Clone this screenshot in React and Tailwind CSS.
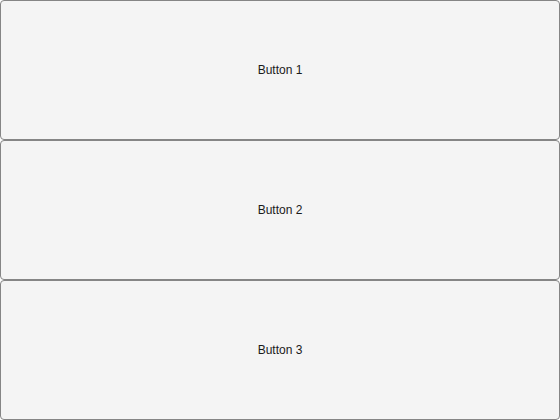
export default function App() {
  const buttons = ["Button 1", "Button 2", "Button 3"];

  return (
    <div className="flex flex-col w-[560px] h-[420px] bg-white font-['Liberation_Sans',Arial,sans-serif]">
      {buttons.map((label) => (
        <button
          key={label}
          className="h-[140px] w-full bg-[#f4f4f4] border border-[#858585] rounded-[4px] text-[12px] text-[#1a1a1a] flex items-center justify-center"
        >
          {label}
        </button>
      ))}
    </div>
  );
}
